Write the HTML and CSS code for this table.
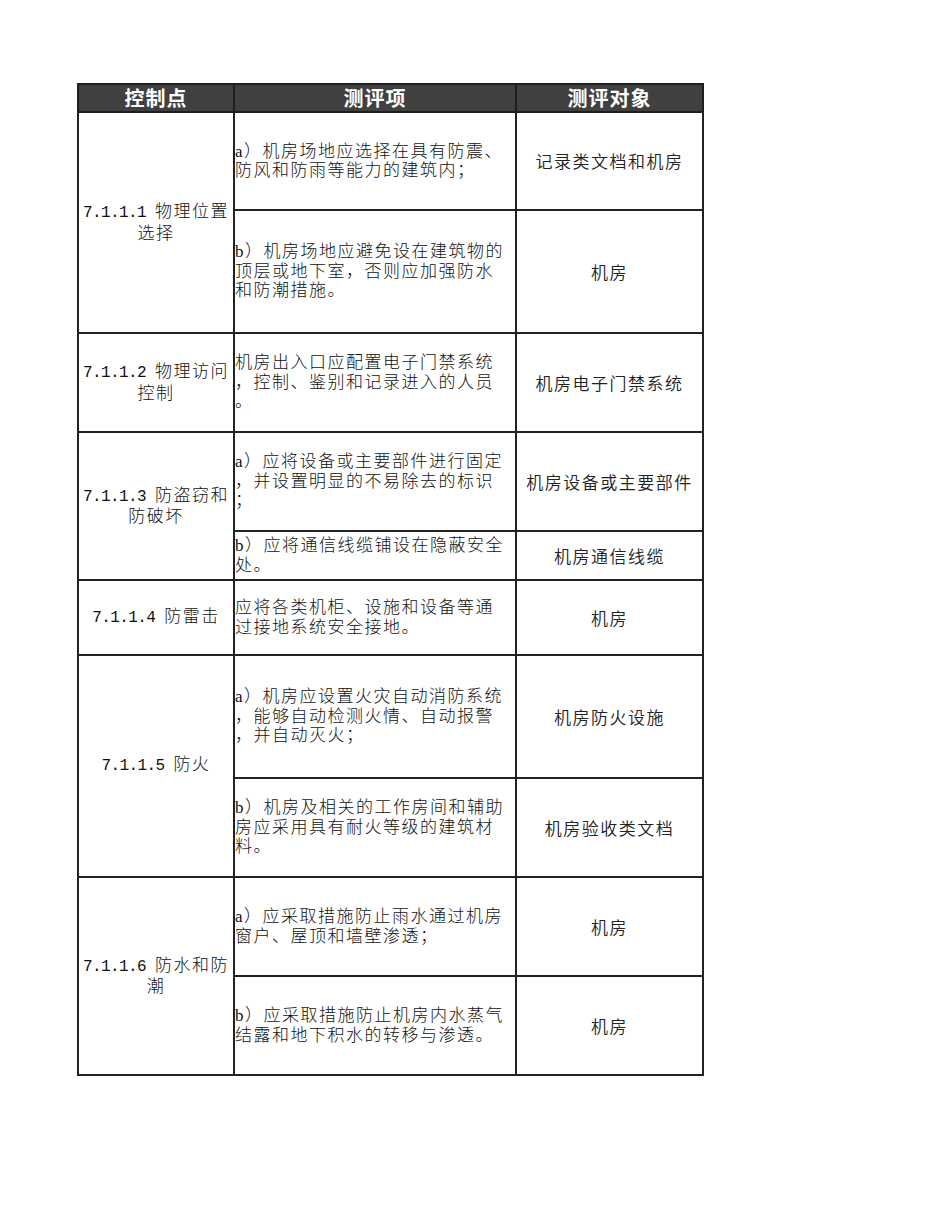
FILE: index.html
```html
<!DOCTYPE html>
<html lang="zh-CN">
<head>
<meta charset="utf-8">
<title>测评表</title>
<link rel="stylesheet" href="styles.css">
</head>
<body>
<div class="page">
<table class="grid">
  <colgroup>
    <col class="c1">
    <col class="c2">
    <col class="c3">
  </colgroup>
  <thead>
    <tr class="head">
      <th>控制点</th>
      <th>测评项</th>
      <th>测评对象</th>
    </tr>
  </thead>
  <tbody>
    <tr class="h98">
      <td class="point" rowspan="2"><span class="num">7.1.1.1 </span>物理位置<br>选择</td>
      <td class="item">a）机房场地应选择在具有防震、<br>防风和防雨等能力的建筑内；</td>
      <td class="obj">记录类文档和机房</td>
    </tr>
    <tr class="h123">
      <td class="item">b）机房场地应避免设在建筑物的<br>顶层或地下室，否则应加强防水<br>和防潮措施。</td>
      <td class="obj">机房</td>
    </tr>
    <tr class="h99">
      <td class="point"><span class="num">7.1.1.2 </span>物理访问<br>控制</td>
      <td class="item">机房出入口应配置电子门禁系统<br>，控制、鉴别和记录进入的人员<br>。</td>
      <td class="obj">机房电子门禁系统</td>
    </tr>
    <tr class="h99">
      <td class="point" rowspan="2"><span class="num">7.1.1.3 </span>防盗窃和<br>防破坏</td>
      <td class="item">a）应将设备或主要部件进行固定<br>，并设置明显的不易除去的标识<br>；</td>
      <td class="obj">机房设备或主要部件</td>
    </tr>
    <tr class="h49">
      <td class="item">b）应将通信线缆铺设在隐蔽安全<br>处。</td>
      <td class="obj">机房通信线缆</td>
    </tr>
    <tr class="h75">
      <td class="point"><span class="num">7.1.1.4 </span>防雷击</td>
      <td class="item">应将各类机柜、设施和设备等通<br>过接地系统安全接地。</td>
      <td class="obj">机房</td>
    </tr>
    <tr class="h123">
      <td class="point" rowspan="2"><span class="num">7.1.1.5 </span>防火</td>
      <td class="item">a）机房应设置火灾自动消防系统<br>，能够自动检测火情、自动报警<br>，并自动灭火；</td>
      <td class="obj">机房防火设施</td>
    </tr>
    <tr class="h99">
      <td class="item">b）机房及相关的工作房间和辅助<br>房应采用具有耐火等级的建筑材<br>料。</td>
      <td class="obj">机房验收类文档</td>
    </tr>
    <tr class="h99">
      <td class="point" rowspan="2"><span class="num">7.1.1.6 </span>防水和防<br>潮</td>
      <td class="item">a）应采取措施防止雨水通过机房<br>窗户、屋顶和墙壁渗透；</td>
      <td class="obj">机房</td>
    </tr>
    <tr class="h99">
      <td class="item">b）应采取措施防止机房内水蒸气<br>结露和地下积水的转移与渗透。</td>
      <td class="obj">机房</td>
    </tr>
  </tbody>
</table>
</div>
</body>
</html>
```

FILE: styles.css
```css
html, body {
  margin: 0;
  padding: 0;
  background: #ffffff;
}

.page {
  padding: 83px 0 0 77px;
}

.grid {
  border-collapse: collapse;
  table-layout: fixed;
  width: 625px;
  color: #111111;
}

.c1 { width: 156px; }
.c2 { width: 282px; }
.c3 { width: 187px; }

.grid th,
.grid td {
  border: 2px solid #222222;
  padding: 0;
  vertical-align: middle;
  white-space: nowrap;
  overflow: hidden;
}

.head {
  height: 28px;
}

.head th {
  background: #404040;
  color: #ffffff;
  font-family: "Noto Sans CJK SC", sans-serif;
  font-size: 20px;
  font-weight: 700;
  letter-spacing: 1px;
  line-height: 24px;
  text-align: center;
  border-color: #1e1e1e;
}

.h49 { height: 49px; }
.h75 { height: 75px; }
.h98 { height: 98px; }
.h99 { height: 99px; }
.h123 { height: 123px; }

.point,
.item {
  font-family: "Liberation Serif", "Noto Sans CJK SC", serif;
  font-size: 17px;
  font-weight: 300;
  letter-spacing: 1.5px;
  line-height: 19.5px;
}

.point {
  text-align: center;
  padding-top: 7px;
}

.item {
  text-align: left;
  padding: 9px 0 0 1px;
}

.obj {
  text-align: center;
  font-family: "Noto Sans CJK SC", sans-serif;
  font-size: 17px;
  font-weight: 350;
  letter-spacing: 1.5px;
  line-height: 20px;
  color: #222222;
  padding-top: 5px;
}

.num {
  font-family: "Liberation Mono", monospace;
  font-size: 16px;
  letter-spacing: -0.6px;
}
```
